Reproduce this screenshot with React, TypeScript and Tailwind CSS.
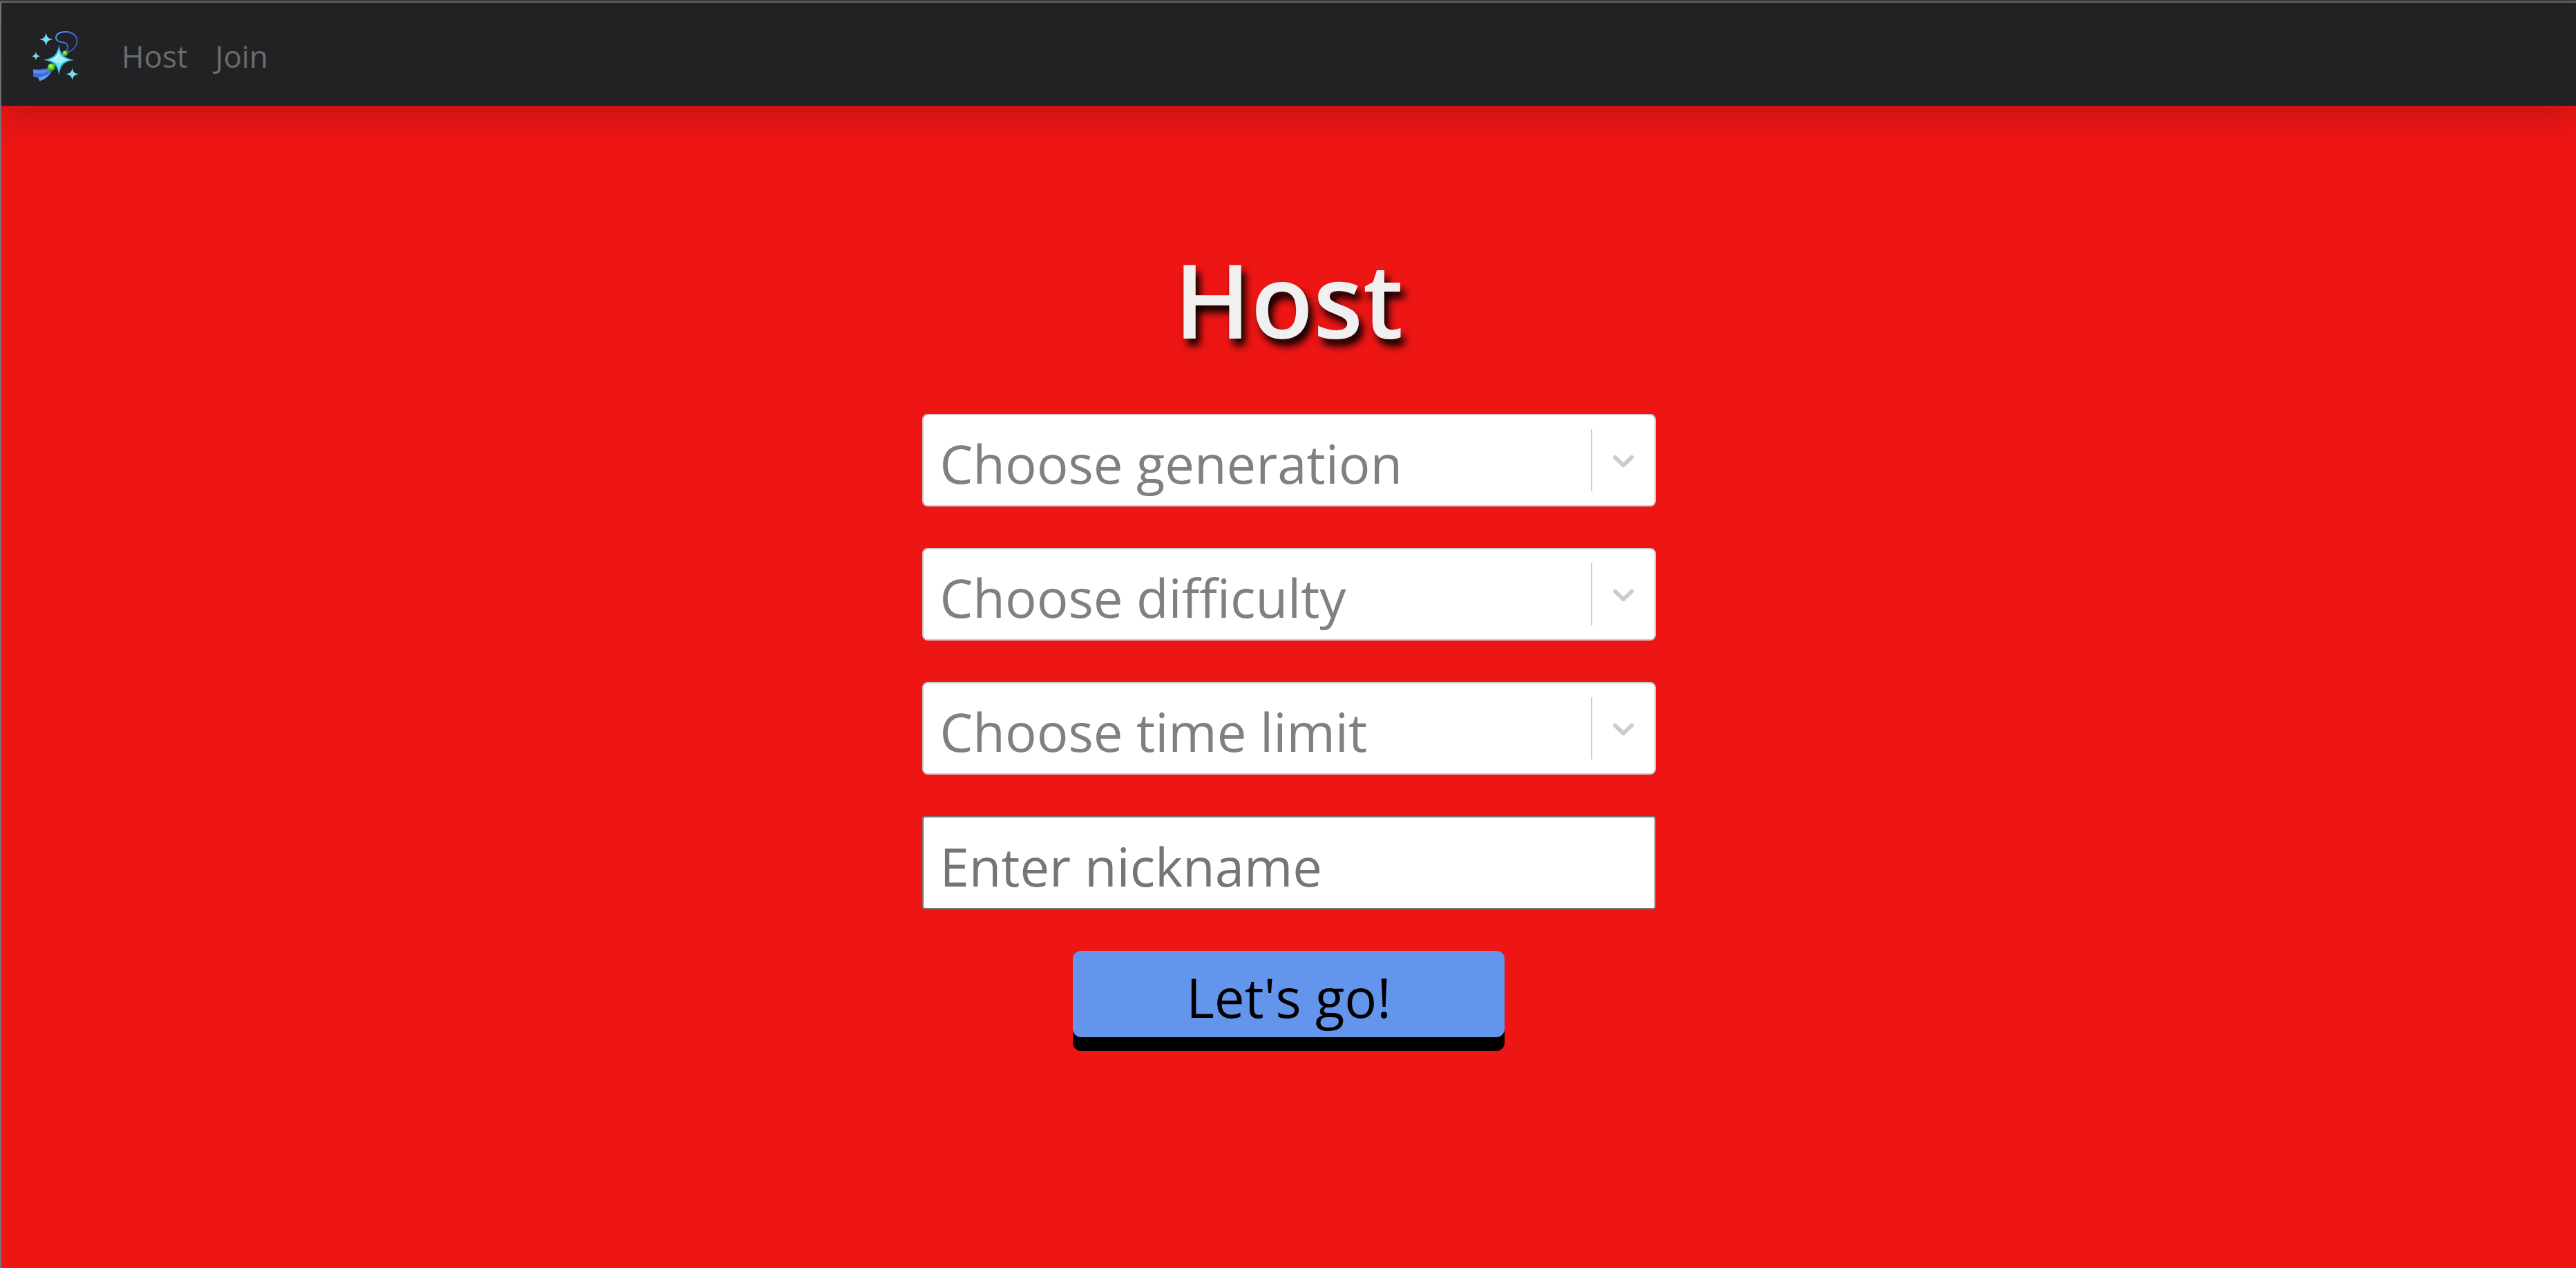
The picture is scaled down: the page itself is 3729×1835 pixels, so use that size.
import React from "react";

const fieldText = "text-[76px] leading-[108px]";

function Logo() {
  return (
    <svg viewBox="0 0 240 270" className="h-[90px] w-20" aria-hidden="true">
      <defs>
        <linearGradient id="cord" x1="0" y1="0" x2="1" y2="1">
          <stop offset="0" stopColor="#5c9df2" />
          <stop offset="0.5" stopColor="#4272de" />
          <stop offset="1" stopColor="#1f4fa0" />
        </linearGradient>
        <radialGradient id="bead" cx="0.4" cy="0.35" r="0.65">
          <stop offset="0" stopColor="#d4ff9a" />
          <stop offset="0.35" stopColor="#6fe02a" />
          <stop offset="0.75" stopColor="#43b80d" />
          <stop offset="1" stopColor="#236a08" />
        </radialGradient>
      </defs>
      <path
        d="M164 125 C172 114 177 101 172 92 C165 78 144 86 130 75 C116 62 125 43 147 38 C183 31 213 47 215 74 C216 97 197 118 172 124"
        fill="none"
        stroke="url(#cord)"
        strokeWidth="6"
      />
      <path d="M24 198 C48 202 73 199 92 193 L105 207 C96 225 79 243 52 250 L46 235 L25 232 Z" fill="#4272e0" />
      <path d="M24 201 C48 208 76 206 96 200 C82 213 55 220 25 213 Z" fill="#5796f0" />
      <path d="M43 233 C66 230 86 221 98 211 C91 228 74 244 52 250 L48 239 Z" fill="#5c9df5" />
      <path d="M40 232 C62 229 78 224 92 214" fill="none" stroke="#1d3f86" strokeWidth="2" />
      <circle cx="163" cy="130" r="12" fill="url(#bead)" />
      <path d="M136 91 C141 132 158 152 203 158 C158 165 143 180 136 224 C130 181 113 165 69 158 C112 151 130 134 136 91 Z" fill="#35bdea" />
      <path d="M136 112 C140 141 154 153 182 158 C154 163 141 174 136 204 C131 174 116 163 89 158 C117 152 131 140 136 112 Z" fill="#98f1f5" />
      <path d="M182 158 C154 163 141 174 136 204 C134 188 129 177 121 171 C143 174 158 167 182 158 Z" fill="#72dff0" />
      <path d="M132 134 C128 145 122 151 114 155" fill="none" stroke="#effeff" strokeWidth="4" strokeLinecap="round" />
      <circle cx="104" cy="190" r="17" fill="url(#bead)" />
      <g fill="#74dff0">
        <path d="M80 39 C83 59 89 66 111 69 C89 72 83 79 80 98 C77 79 71 72 50 69 C71 66 77 59 80 39 Z" />
        <path d="M36 121 C38 135 42 140 56 142 C42 144 38 148 36 161 C34 148 30 144 16 142 C30 140 34 135 36 121 Z" />
        <path d="M194 193 C197 211 203 217 222 220 C203 223 197 229 194 247 C191 229 185 223 167 220 C185 217 191 211 194 193 Z" />
      </g>
    </svg>
  );
}

function ChoiceField({ label, options }: { label: string; options: string[] }) {
  return (
    <div className="relative w-full">
      <select
        aria-label={label}
        defaultValue=""
        className={`block h-[134px] w-full appearance-none rounded-lg border-2 border-[#cccccc] bg-white pt-3.5 pr-[92px] pb-1 pl-6 text-[#808080] ${fieldText}`}
      >
        <option value="" disabled>
          {label}
        </option>
        {options.map((option) => (
          <option key={option}>{option}</option>
        ))}
      </select>
      <div className="pointer-events-none absolute inset-y-[22px] right-0.5 flex w-[92px] items-center justify-center border-l-2 border-[#cccccc]">
        <svg viewBox="0 0 20 20" className="size-[52px] fill-[#cccccc]" aria-hidden="true">
          <path d="M4.516 7.548c0.436-0.446 1.043-0.481 1.576 0l3.908 3.747 3.908-3.747c0.533-0.481 1.141-0.446 1.574 0 0.436 0.445 0.408 1.197 0 1.615-0.406 0.418-4.695 4.502-4.695 4.502-0.217 0.223-0.502 0.335-0.787 0.335s-0.57-0.112-0.789-0.335c0 0-4.287-4.084-4.695-4.502s-0.436-1.17 0-1.615z" />
        </svg>
      </div>
    </div>
  );
}

export default function App() {
  return (
    <div className="min-h-screen border-t-2 border-[#3c3c3c] bg-[#ee1615] font-['Open_Sans',sans-serif]">
      <div className="min-h-[calc(100vh-2px)] border-t-2 border-l-2 border-t-[#666666] border-l-[#777777]">
        <nav className="flex h-[149px] items-center bg-[#222224] pl-[38px] shadow-[0_16px_48px_rgba(0,0,0,0.18)]">
          <a href="#home" aria-label="Home" className="mr-14">
            <Logo />
          </a>
          <div className="flex gap-10 pt-1 text-[44px] leading-[60px] text-[#6c6c6c]">
            <a href="#host">Host</a>
            <a href="#join">Join</a>
          </div>
        </nav>
        <main className="flex flex-col items-center pt-[184px]">
          <h1 className="text-[148px] leading-[192px] font-semibold text-[#f0f0f0] [text-shadow:6px_10px_12px_black]">Host</h1>
          <form className="mt-[70px] flex w-[1062px] max-w-full flex-col items-center gap-[60px]">
            <ChoiceField label="Choose generation" options={["Generation 1", "Generation 2", "Generation 3"]} />
            <ChoiceField label="Choose difficulty" options={["Easy", "Normal", "Hard"]} />
            <ChoiceField label="Choose time limit" options={["30 seconds", "60 seconds", "90 seconds"]} />
            <input
              type="text"
              aria-label="Nickname"
              placeholder="Enter nickname"
              className={`h-[135px] w-full rounded border-2 border-[#767676] bg-white pt-3.5 pb-1 pl-6 text-black placeholder:text-[#757575] ${fieldText}`}
            />
            <button
              type="button"
              className="h-[125px] w-[625px] rounded-xl bg-[#6495ed] pt-2 text-[78px] leading-[108px] text-black shadow-[0_20px_0_black]"
            >
              Let's go!
            </button>
          </form>
        </main>
      </div>
    </div>
  );
}
